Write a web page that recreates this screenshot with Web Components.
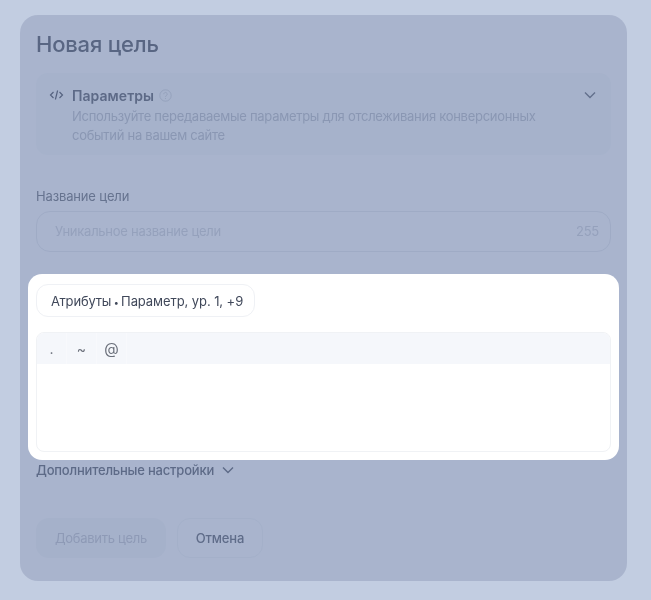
<!DOCTYPE html>
<html lang="ru">
  <head>
    <meta charset="UTF-8" />
    <meta name="viewport" content="width=device-width, initial-scale=1.0" />
    <title>Новая цель</title>
    <style>
      html, body { margin: 0; height: 100%; }
      body {
        background: #c2cde1;
        font-family: "Inter", "Noto Sans", sans-serif;
        overflow: hidden;
      }
    </style>
  </head>
  <body>
    <goal-dialog>
      <param-panel></param-panel>
      <text-field></text-field>
      <attr-panel></attr-panel>
      <more-settings></more-settings>
      <form-actions></form-actions>
    </goal-dialog>

    <script>
      const chevron = `<svg width="14" height="14" viewBox="0 0 14 14" fill="none"><path d="M2 4.5 7 9.5 12 4.5" stroke="currentColor" stroke-width="1.4"/></svg>`;

      class GoalDialog extends HTMLElement {
        constructor() {
          super();
          this.attachShadow({ mode: "open" });
          this.shadowRoot.innerHTML = `
            <style>
              :host {
                display: block;
                box-sizing: border-box;
                width: 607px;
                height: 566px;
                margin: 15px 0 0 20px;
                padding: 15px 16px 0;
                background: #a9b4cd;
                border-radius: 18px;
              }
              h1 {
                margin: 0 0 15px;
                font-size: 22px;
                line-height: 28px;
                font-weight: 500;
                letter-spacing: -0.2px;
                color: #596683;
                filter: blur(0.4px);
              }
            </style>
            <h1>Новая цель</h1>
            <slot></slot>
          `;
        }
      }

      class ParamPanel extends HTMLElement {
        constructor() {
          super();
          this.attachShadow({ mode: "open" });
          this.shadowRoot.innerHTML = `
            <style>
              :host {
                display: flex;
                box-sizing: border-box;
                height: 82px;
                padding: 12px 14px 0 13px;
                gap: 8px;
                background: #a6b2cb;
                border-radius: 12px;
                filter: blur(0.4px);
              }
              .code { width: 15px; flex: none; margin-top: 3px; color: #566380; }
              .body { flex: 1; }
              .head {
                display: flex;
                align-items: center;
                gap: 5px;
                height: 20px;
                font-size: 14px;
                font-weight: 600;
                letter-spacing: 0.05px;
                color: #5d6a87;
              }
              .help { color: #95a2bc; }
              p {
                margin: 2px 0 0;
                font-size: 13px;
                line-height: 19px;
                letter-spacing: -0.28px;
                color: #8a97b3;
                width: 480px;
              }
              .arrow { flex: none; color: #63708d; margin: 1px 0 0 0; }
            </style>
            <svg class="code" width="15" height="14" viewBox="0 0 15 14" fill="none" stroke="currentColor" stroke-width="1.2">
              <path d="M4.5 4 1.5 7l3 3M10.5 4l3 3-3 3M8.6 2.5 6.4 11.5"/>
            </svg>
            <div class="body">
              <div class="head">
                <span>Параметры</span>
                <svg class="help" width="13" height="13" viewBox="0 0 13 13" fill="none" stroke="currentColor" stroke-width="1">
                  <circle cx="6.5" cy="6.5" r="5.7"/>
                  <path d="M4.8 5.2a1.7 1.7 0 1 1 2.6 1.4c-.6.4-.9.7-.9 1.4M6.5 9v1"/>
                </svg>
              </div>
              <p>Используйте передаваемые параметры для отслеживания конверсионных событий на вашем сайте</p>
            </div>
            <span class="arrow">${chevron}</span>
          `;
        }
      }

      class TextField extends HTMLElement {
        constructor() {
          super();
          this.attachShadow({ mode: "open" });
          this.shadowRoot.innerHTML = `
            <style>
              :host {
                display: block;
                margin: 32px 0 22px;
                filter: blur(0.4px);
              }
              label {
                display: block;
                height: 18px;
                margin-bottom: 6px;
                font-size: 13px;
                line-height: 18px;
                letter-spacing: -0.15px;
                color: #66738f;
              }
              .box {
                display: flex;
                justify-content: space-between;
                align-items: center;
                box-sizing: border-box;
                height: 41px;
                padding: 0 11px 1px 18px;
                border: 1px solid #9fabc5;
                border-radius: 14px;
                font-size: 13px;
                letter-spacing: -0.25px;
                color: #95a1bc;
              }
            </style>
            <label>Название цели</label>
            <div class="box"><span>Уникальное название цели</span><span>255</span></div>
          `;
        }
      }

      class AttrPanel extends HTMLElement {
        constructor() {
          super();
          this.attachShadow({ mode: "open" });
          this.shadowRoot.innerHTML = `
            <style>
              :host {
                display: block;
                box-sizing: border-box;
                height: 186px;
                margin: 0 -8px;
                padding: 10px 8px 0;
                background: #fff;
                border-radius: 14px;
              }
              .chip {
                display: inline-flex;
                align-items: center;
                box-sizing: border-box;
                height: 33px;
                width: 219px;
                padding: 0 0 0 14px;
                border: 1px solid #eff1f5;
                border-radius: 12px;
                font-size: 13px;
                letter-spacing: -0.18px;
                color: #40485a;
                white-space: pre;
              }
              .chip span { filter: blur(0.25px); }
              .chip b { font-size: 9px; font-weight: 400; margin: 0 -1px; }
              .chip i { font-style: normal; letter-spacing: -0.08px; }
              .editor {
                box-sizing: border-box;
                height: 120px;
                margin-top: 15px;
                border: 1px solid #f0f2f5;
                border-radius: 8px;
                overflow: hidden;
              }
              .tools {
                display: flex;
                height: 31px;
                background: #f5f7fb;
              }
              .tools span {
                display: flex;
                align-items: center;
                justify-content: center;
                width: 30px;
                border-right: 1px solid #f8f9fc;
                box-sizing: border-box;
                font-size: 14px;
                color: #6a6f7a;
                filter: blur(0.25px);
              }
              .tools span:last-child { font-size: 15px; }
            </style>
            <div class="chip"><span>Атрибуты <b>•</b> <i>Параметр, ур. 1, +9</i></span></div>
            <div class="editor">
              <div class="tools"><span>.</span><span>~</span><span>@</span></div>
            </div>
          `;
        }
      }

      class MoreSettings extends HTMLElement {
        constructor() {
          super();
          this.attachShadow({ mode: "open" });
          this.shadowRoot.innerHTML = `
            <style>
              :host {
                display: flex;
                align-items: center;
                gap: 7px;
                height: 20px;
                font-size: 13px;
                font-weight: 500;
                letter-spacing: -0.2px;
                color: #5d6a87;
                filter: blur(0.4px);
              }
            </style>
            <span>Дополнительные настройки</span>${chevron}
          `;
        }
      }

      class FormActions extends HTMLElement {
        constructor() {
          super();
          this.attachShadow({ mode: "open" });
          this.shadowRoot.innerHTML = `
            <style>
              :host {
                display: flex;
                gap: 11px;
                margin-top: 38px;
                filter: blur(0.4px);
              }
              div {
                display: flex;
                align-items: center;
                justify-content: center;
                box-sizing: border-box;
                height: 40px;
                border-radius: 13px;
                font-size: 13px;
                letter-spacing: -0.15px;
              }
              .add { width: 130px; background: #a5b1ca; color: #8e9ab6; letter-spacing: -0.28px; }
              .cancel { width: 86px; border: 1px solid #a4b0c9; color: #5f6c89; font-weight: 500; }
            </style>
            <div class="add">Добавить цель</div>
            <div class="cancel">Отмена</div>
          `;
        }
      }

      customElements.define("goal-dialog", GoalDialog);
      customElements.define("param-panel", ParamPanel);
      customElements.define("text-field", TextField);
      customElements.define("attr-panel", AttrPanel);
      customElements.define("more-settings", MoreSettings);
      customElements.define("form-actions", FormActions);
    </script>
  </body>
</html>
